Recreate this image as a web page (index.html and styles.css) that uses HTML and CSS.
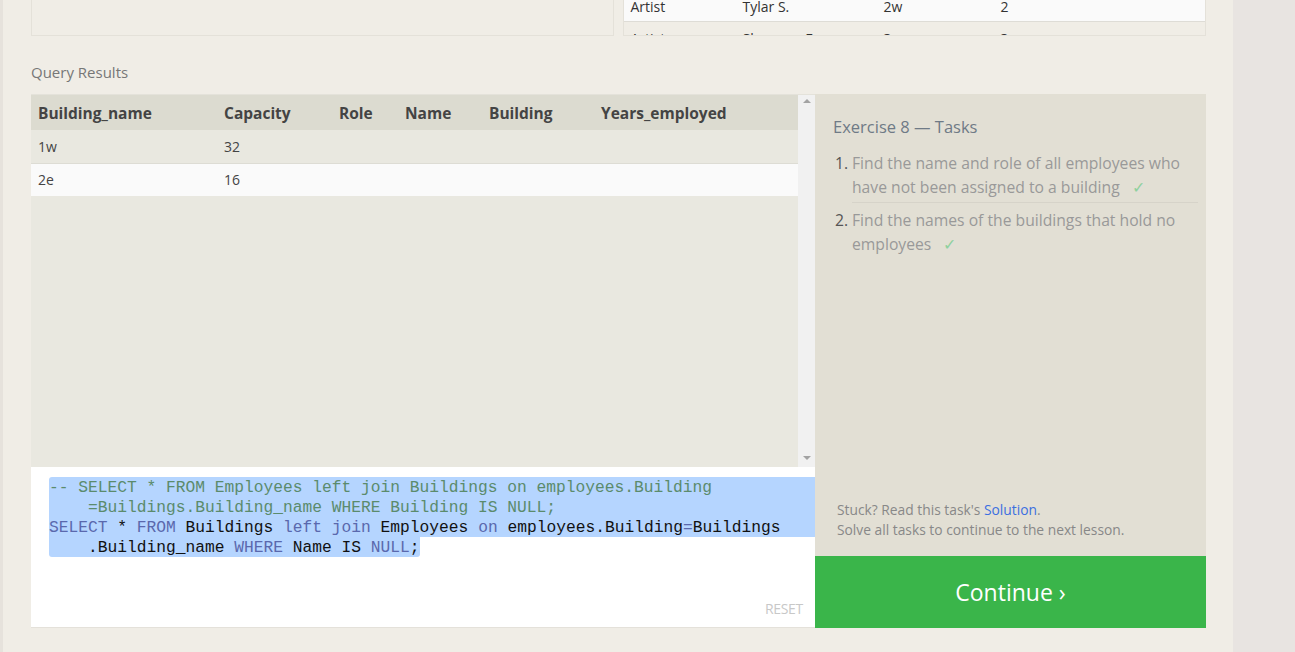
FILE: index.html
```html
<!DOCTYPE html>
<html>
<head>
<meta charset="utf-8">
<link rel="stylesheet" href="styles.css">
</head>
<body>
<div class="page">
  <div class="main">
    <div class="top-strip">
      <div class="top-box"></div>
      <div class="top-box table-box">
        <div class="mini-table">
          <div class="mini-row white">
            <span class="c1">Artist</span><span class="c2">Tylar S.</span><span class="c3">2w</span><span class="c4">2</span>
          </div>
          <div class="mini-row tall">
            <span class="c1">Artist</span><span class="c2">Sherman F.</span><span class="c3">3e</span><span class="c4">3</span>
          </div>
        </div>
      </div>
    </div>

    <div class="section-title">Query Results</div>

    <div class="workspace">
      <div class="left-col">
        <div class="results">
          <div class="results-scroll">
            <table class="results-table">
              <thead>
                <tr><th class="w1">Building_name</th><th class="w2">Capacity</th><th class="w3">Role</th><th class="w4">Name</th><th class="w5">Building</th><th>Years_employed</th></tr>
              </thead>
              <tbody>
                <tr class="odd"><td>1w</td><td>32</td><td></td><td></td><td></td><td></td></tr>
                <tr class="even"><td>2e</td><td>16</td><td></td><td></td><td></td><td></td></tr>
              </tbody>
            </table>
          </div>
          <div class="scrollbar">
            <span class="arrow up"></span>
            <span class="arrow down"></span>
          </div>
        </div>
        <div class="editor">
          <div class="code">
            <div class="ln sel first"><span class="cm">-- SELECT * FROM Employees left join Buildings on employees.Building</span></div>
            <div class="ln sel"><span class="cm">    =Buildings.Building_name WHERE Building IS NULL;</span></div>
            <div class="ln sel"><span class="kw">SELECT</span> * <span class="kw">FROM</span> Buildings <span class="kw">left join</span> Employees <span class="kw">on</span> employees.Building<span class="kw">=</span>Buildings</div>
            <div class="ln last"><span class="sel-inline">    .Building_name <span class="kw">WHERE</span> Name IS <span class="kw">NULL</span>;</span></div>
          </div>
          <div class="reset">RESET</div>
        </div>
      </div>

      <div class="right-col">
        <div class="tasks">
          <div class="tasks-title">Exercise 8 — Tasks</div>
          <ol class="task-list">
            <li class="task sep"><span class="num">1.</span><span class="task-text">Find the name and role of all employees who have not been assigned to a building <span class="check">✓</span></span></li>
            <li class="task"><span class="num">2.</span><span class="task-text">Find the names of the buildings that hold no employees <span class="check">✓</span></span></li>
          </ol>
          <div class="stuck">
            <div>Stuck? Read this task's <a class="link">Solution</a>.</div>
            <div>Solve all tasks to continue to the next lesson.</div>
          </div>
        </div>
        <div class="continue">Continue ›</div>
      </div>
    </div>
  </div>
  <div class="gutter"></div>
</div>
</body>
</html>
```

FILE: styles.css
```css
* { box-sizing: border-box; }
html, body { margin: 0; padding: 0; }
body {
  font-family: "Open Sans", "Noto Sans", sans-serif;
  background: #efece6;
  color: #333;
  width: 1295px;
  height: 652px;
  overflow: hidden;
}
.page {
  display: flex;
  height: 652px;
}
.main {
  width: 1233px;
  padding-left: 28px;
  padding-right: 27px;
  background: #f0ede6;
  border-left: 3px solid #e6e2dc;
}
.gutter {
  flex: 1;
  background: #e8e4e1;
}
.top-strip {
  display: flex;
  gap: 9px;
  height: 36px;
}
.top-box {
  width: 583px;
  height: 36px;
  border: 1px solid #e4e1d9;
  border-top: none;
  overflow: hidden;
}
.table-box { width: 584px; }
.mini-table { margin-top: -8px; }
.mini-row {
  display: flex;
  height: 30px;
  align-items: center;
  font-size: 14px;
  color: #333;
  border-bottom: 1px solid #dedcd6;
}
.mini-row.white { background: #fafafa; }
.mini-row.tall { height: 34px; }
.mini-row span { display: block; }
.c1 { width: 119px; padding-left: 7px; }
.c2 { width: 141px; }
.c3 { width: 117px; }
.c4 { flex: 1; }

.section-title {
  font-size: 15px;
  color: #777;
  height: 58px;
  padding-top: 26px;
}

.workspace {
  display: flex;
  height: 534px;
}
.left-col {
  width: 784px;
  display: flex;
  flex-direction: column;
}
.results {
  height: 373px;
  flex: none;
  display: flex;
  background: #e9e8e0;
  border-top: 1px solid #e4e2da;
}
.results-scroll {
  flex: 1;
}
.results-table {
  width: 100%;
  border-collapse: collapse;
  table-layout: fixed;
}
.results-table th {
  background: #dcdbd0;
  text-align: left;
  font-weight: 700;
  color: #444;
  height: 35px;
  padding: 0 7px;
  font-size: 15.5px;
}
.results-table td {
  height: 33px;
  padding: 0 7px;
  color: #444;
  font-size: 14px;
}
.w1 { width: 186px; }
.w2 { width: 115px; }
.w3 { width: 66px; }
.w4 { width: 84px; }
.w5 { width: 112px; }
.results-table tr.odd td { background: #e9e8e0; border-bottom: 1px solid #dddcd4; }
.results-table tr.even td { background: #fafafa; }

.scrollbar {
  width: 17px;
  background: #f1f1f1;
  position: relative;
}
.arrow {
  position: absolute;
  left: 5px;
  width: 0;
  height: 0;
  border-left: 4px solid transparent;
  border-right: 4px solid transparent;
}
.arrow.up { top: 4px; border-bottom: 4px solid #a3a3a3; }
.arrow.down { bottom: 7px; border-top: 4px solid #a3a3a3; }

.editor {
  flex: 1;
  background: #fff;
  padding: 10px 0 0 18px;
  display: flex;
  flex-direction: column;
  border-bottom: 1px solid #e4e1da;
}
.code {
  font-family: "Liberation Mono", "DejaVu Sans Mono", monospace;
  font-size: 16.25px;
  color: #111;
}
.ln {
  height: 20px;
  line-height: 18px;
  padding-top: 2px;
  white-space: pre;
}
.ln.last { padding-top: 0; }
.sel { background: #b5d5ff; }
.first { border-top-left-radius: 3px; }
.sel-inline {
  background: #b5d5ff;
  display: inline-block;
  height: 20px;
  line-height: 18px;
  padding-top: 2px;
  border-radius: 0 0 3px 3px;
}
.cm { color: #5b8b6c; }
.kw { color: #5a68ad; }
.reset {
  margin-top: auto;
  align-self: flex-end;
  margin-right: 12px;
  margin-bottom: 9px;
  font-size: 14px;
  color: #c8c8c8;
  letter-spacing: -0.3px;
}

.right-col {
  width: 391px;
  display: flex;
  flex-direction: column;
}
.tasks {
  flex: 1;
  background: #e2dfd4;
  padding: 21px 8px 0 18px;
  display: flex;
  flex-direction: column;
}
.tasks-title {
  font-size: 16.5px;
  color: #6f7a86;
  margin-bottom: 13px;
}
.task-list {
  list-style: none;
  margin: 0;
  padding: 0;
}
.task {
  display: flex;
  font-size: 15.7px;
  line-height: 24px;
  color: #999;
  padding: 0 0 8px 2px;
  position: relative;
}
.task.sep::after {
  content: "";
  position: absolute;
  left: 19px;
  right: 0;
  bottom: 4px;
  border-bottom: 1px solid #d6d3c9;
}
.task + .task { padding-top: 1px; }
.num {
  width: 17px;
  color: #555;
  flex: none;
}
.task-text { flex: 1; }
.check {
  color: #8fd19e;
  margin-left: 8px;
}
.stuck {
  margin-top: auto;
  margin-bottom: 16px;
  font-size: 13.8px;
  line-height: 20px;
  color: #888;
  padding-left: 4px;
}
.link { color: #3c6fe0; }
.continue {
  height: 72px;
  background: #3ab54a;
  color: #fff;
  font-size: 23px;
  display: flex;
  align-items: center;
  justify-content: center;
}
```
